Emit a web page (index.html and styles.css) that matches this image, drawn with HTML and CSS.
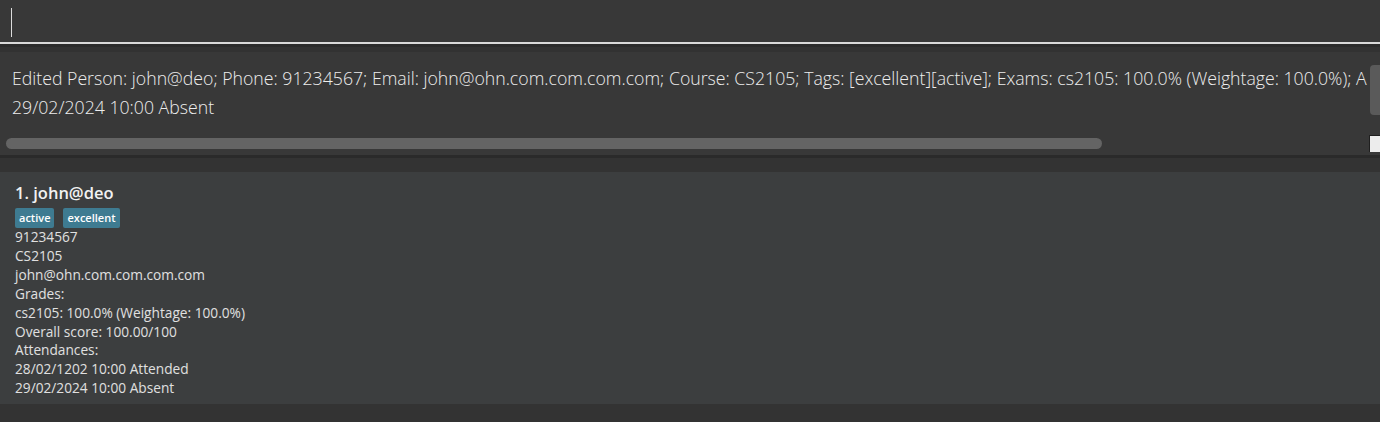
FILE: index.html
```html
<!DOCTYPE html>
<html lang="en">
<head>
<meta charset="utf-8">
<title>Address Book</title>
<link rel="stylesheet" href="styles.css">
</head>
<body>
<div class="app">
  <div class="command-box">
    <div class="command-field"><span class="caret"></span></div>
  </div>
  <div class="separator-top"></div>
  <div class="result-pane">
    <div class="result-viewport">
      <div class="result-text">
        <div class="result-line">Edited Person: john@deo; Phone: 91234567; Email: john@ohn.com.com.com.com; Course: CS2105; Tags: [excellent][active]; Exams: cs2105: 100.0% (Weightage: 100.0%); A</div>
        <div class="result-line">29/02/2024 10:00 Absent</div>
      </div>
      <div class="vscroll"><div class="vthumb"></div></div>
    </div>
    <div class="hscroll-row">
      <div class="hscroll"><div class="hthumb"></div></div>
      <div class="corner"></div>
    </div>
  </div>
  <div class="separator-bottom"></div>
  <div class="list-pane">
    <div class="card">
      <div class="card-name">1. john@deo</div>
      <div class="tags">
        <span class="tag">active</span>
        <span class="tag">excellent</span>
      </div>
      <div class="card-line">91234567</div>
      <div class="card-line">CS2105</div>
      <div class="card-line">john@ohn.com.com.com.com</div>
      <div class="card-line">Grades:</div>
      <div class="card-line">cs2105: 100.0% (Weightage: 100.0%)</div>
      <div class="card-line">Overall score: 100.00/100</div>
      <div class="card-line">Attendances:</div>
      <div class="card-line">28/02/1202 10:00 Attended</div>
      <div class="card-line">29/02/2024 10:00 Absent</div>
    </div>
  </div>
</div>
</body>
</html>
```

FILE: styles.css
```css
html, body {
  margin: 0;
  padding: 0;
  background: #333333;
  font-family: "Open Sans", "Noto Sans", sans-serif;
}

.app {
  width: 1380px;
  height: 422px;
  display: flex;
  flex-direction: column;
  overflow: hidden;
}

.command-box {
  height: 42px;
  background: #383838;
  border-bottom: 2px solid #d9d9d9;
  display: flex;
  align-items: flex-start;
}

.command-field {
  padding: 8px 0 0 11px;
}

.caret {
  display: block;
  width: 1px;
  height: 29px;
  background: #dcdcdc;
}

.separator-top {
  height: 3px;
  background: #2b2b2b;
  border-bottom: 5px solid #323232;
}

.result-pane {
  height: 103px;
  background: #383838;
  display: flex;
  flex-direction: column;
}

.result-viewport {
  height: 83px;
  display: flex;
}

.result-text {
  flex: 1;
  overflow: hidden;
  padding: 12px 0 0 12px;
  font-weight: 300;
  font-size: 17.7px;
  line-height: 29px;
  color: #ededed;
}

.result-line {
  white-space: nowrap;
}

.vscroll {
  width: 10px;
  padding-left: 2px;
}

.vthumb {
  margin-top: 13px;
  width: 10px;
  height: 50px;
  background: #5a5a5a;
  border-radius: 4px 0 0 4px;
}

.hscroll-row {
  height: 17px;
  display: flex;
}

.hscroll {
  flex: 1;
  padding: 3px 0 0 6px;
}

.hthumb {
  width: 1096px;
  height: 11px;
  border-radius: 6px;
  background: #646464;
}

.corner {
  width: 10px;
  height: 16px;
  background: #ececec;
  border-top: 1px solid #1f1f1f;
  border-left: 1px solid #1f1f1f;
}

.separator-bottom {
  height: 3px;
  background: #2a2a2a;
}

.list-pane {
  flex: 1;
  background: #333333;
  padding-top: 14px;
}

.card {
  height: 232px;
  box-sizing: border-box;
  background: #3c3e3f;
  padding: 10px 0 0 15px;
}

.card-name {
  font-size: 16.5px;
  font-weight: 600;
  line-height: 22px;
  color: #f2f2f2;
}

.tags {
  display: flex;
  gap: 9px;
  margin-top: 4px;
  height: 20px;
}

.tag {
  background: #3e7b91;
  color: #ffffff;
  font-size: 11px;
  font-weight: 600;
  line-height: 18px;
  padding: 1px 4px;
  border-radius: 2px;
}

.card-line {
  font-size: 13.7px;
  line-height: 18.9px;
  color: #e0e0e0;
}
```
